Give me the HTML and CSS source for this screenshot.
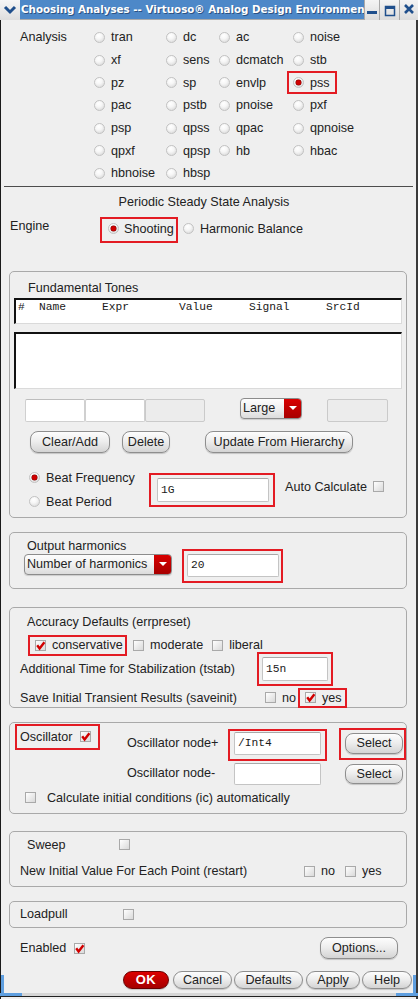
FILE: index.html
```html
<!DOCTYPE html>
<html>
<head>
<meta charset="utf-8">
<link rel="stylesheet" href="styles.css">
</head>
<body>
<div class="window">
  <div class="titlebar">
    <div class="tb-menu"><svg width="14" height="10" viewBox="0 0 14 10"><path d="M2 2 L7 7 L12 2" fill="none" stroke="#1f4f8c" stroke-width="3"/></svg></div>
    <div class="tb-title">Choosing Analyses -- Virtuoso® Analog Design Environment</div>
    <div class="tb-btn tb-min"><svg width="11" height="18" viewBox="0 0 11 18"><rect x="0" y="11" width="10" height="3" fill="#1f4f8c"/></svg></div>
    <div class="tb-btn tb-max"><svg width="12" height="18" viewBox="0 0 12 18"><rect x="1.5" y="6.5" width="9" height="9" fill="none" stroke="#1f4f8c" stroke-width="1.5"/><rect x="1" y="6" width="10" height="3" fill="#1f4f8c"/></svg></div>
    <div class="tb-btn tb-close"><svg width="12" height="18" viewBox="0 0 12 18"><path d="M2 5 L10 13 M10 5 L2 13" stroke="#1f4f8c" stroke-width="2.6"/></svg></div>
  </div>

  <div class="analysis">
    <div class="an-label">Analysis</div>
    <div class="opt"><span class="radio"></span>tran</div>
    <div class="opt"><span class="radio"></span>dc</div>
    <div class="opt"><span class="radio"></span>ac</div>
    <div class="opt"><span class="radio"></span>noise</div>
    <div class="opt"><span class="radio"></span>xf</div>
    <div class="opt"><span class="radio"></span>sens</div>
    <div class="opt"><span class="radio"></span>dcmatch</div>
    <div class="opt"><span class="radio"></span>stb</div>
    <div class="opt"><span class="radio"></span>pz</div>
    <div class="opt"><span class="radio"></span>sp</div>
    <div class="opt"><span class="radio"></span>envlp</div>
    <div class="opt hl pss"><span class="radio on"></span>pss</div>
    <div class="opt"><span class="radio"></span>pac</div>
    <div class="opt"><span class="radio"></span>pstb</div>
    <div class="opt"><span class="radio"></span>pnoise</div>
    <div class="opt"><span class="radio"></span>pxf</div>
    <div class="opt"><span class="radio"></span>psp</div>
    <div class="opt"><span class="radio"></span>qpss</div>
    <div class="opt"><span class="radio"></span>qpac</div>
    <div class="opt"><span class="radio"></span>qpnoise</div>
    <div class="opt"><span class="radio"></span>qpxf</div>
    <div class="opt"><span class="radio"></span>qpsp</div>
    <div class="opt"><span class="radio"></span>hb</div>
    <div class="opt"><span class="radio"></span>hbac</div>
    <div class="opt"><span class="radio"></span>hbnoise</div>
    <div class="opt"><span class="radio"></span>hbsp</div>
  </div>

  <div class="sep"></div>
  <div class="section-title">Periodic Steady State Analysis</div>

  <div class="engine">
    <div class="engine-label">Engine</div>
    <div class="opt hl shoot"><span class="radio on"></span>Shooting</div>
    <div class="opt harm"><span class="radio"></span>Harmonic Balance</div>
  </div>

  <div class="group g-fund">
    <div class="gtitle">Fundamental Tones</div>
    <div class="tbl tbl-head">
      <span>#</span><span>Name</span><span>Expr</span><span>Value</span><span>Signal</span><span>SrcId</span>
    </div>
    <div class="tbl tbl-body"></div>
    <div class="entry-row">
      <div class="fld"></div>
      <div class="fld"></div>
      <div class="fld dis"></div>
      <div class="combo combo-large"><span class="cval">Large</span><span class="carrow"><i></i></span></div>
      <div class="fld dis fld-right"></div>
    </div>
    <div class="btn-row">
      <div class="btn b-clear">Clear/Add</div>
      <div class="btn b-delete">Delete</div>
      <div class="btn b-update">Update From Hierarchy</div>
    </div>
    <div class="beat">
      <div class="beat-col">
        <div class="opt beat-opt"><span class="radio on"></span>Beat Frequency</div>
        <div class="opt beat-opt"><span class="radio"></span>Beat Period</div>
      </div>
      <div class="hl box-1g"><div class="entry e-1g">1G</div></div>
      <div class="auto">Auto Calculate<span class="cb"></span></div>
    </div>
  </div>

  <div class="group g-out">
    <div class="out-left">
      <div class="out-title">Output harmonics</div>
      <div class="combo combo-harm"><span class="cval">Number of harmonics</span><span class="carrow"><i></i></span></div>
    </div>
    <div class="hl box-20"><div class="entry e-20">20</div></div>
  </div>

  <div class="group g-acc">
    <div class="acc-title">Accuracy Defaults (errpreset)</div>
    <div class="acc-checks">
      <div class="hl box-cons"><span class="cb on"><svg width="11" height="11" viewBox="0 0 11 11"><path d="M2.2 5.2 L4.6 8.4 L9.4 2.2" fill="none" stroke="#d10000" stroke-width="2.4"/></svg></span><span class="cb-text">conservative</span></div>
      <span class="cb cb-mod"></span><span class="cb-text">moderate</span>
      <span class="cb cb-lib"></span><span class="cb-text">liberal</span>
    </div>
    <div class="tstab">
      <div class="tstab-label">Additional Time for Stabilization (tstab)</div>
      <div class="hl box-15n"><div class="entry e-15n">15n</div></div>
    </div>
    <div class="saveinit">
      <div class="save-label">Save Initial Transient Results (saveinit)</div>
      <span class="cb"></span><span class="cb-text">no</span>
      <div class="hl box-yes"><span class="cb on"><svg width="11" height="11" viewBox="0 0 11 11"><path d="M2.2 5.2 L4.6 8.4 L9.4 2.2" fill="none" stroke="#d10000" stroke-width="2.4"/></svg></span><span class="cb-text">yes</span></div>
    </div>
  </div>

  <div class="group g-osc">
    <div class="osc-grid">
      <div class="hl box-osc"><span>Oscillator</span><span class="cb on"><svg width="11" height="11" viewBox="0 0 11 11"><path d="M2.2 5.2 L4.6 8.4 L9.4 2.2" fill="none" stroke="#d10000" stroke-width="2.4"/></svg></span></div>
      <div class="node-label nl-plus">Oscillator node+</div>
      <div class="hl box-node"><div class="entry e-node">/Int4</div></div>
      <div class="hl box-sel"><div class="btn b-sel">Select</div></div>
      <div class="node-label nl-minus">Oscillator node-</div>
      <div class="entry e-node2"></div>
      <div class="btn b-sel b-sel2">Select</div>
    </div>
    <div class="ic-row"><span class="cb"></span><span class="ic-text">Calculate initial conditions (ic) automatically</span></div>
  </div>

  <div class="group g-sweep">
    <div class="sweep-row1"><span class="sweep-label">Sweep</span><span class="cb"></span></div>
    <div class="sweep-row2">
      <span class="restart-label">New Initial Value For Each Point (restart)</span>
      <span class="cb"></span><span class="cb-text">no</span>
      <span class="cb cb-yes2"></span><span class="cb-text">yes</span>
    </div>
  </div>

  <div class="group g-load">
    <span class="load-label">Loadpull</span><span class="cb"></span>
  </div>

  <div class="enabled-row">
    <span class="en-label">Enabled</span>
    <span class="cb on"><svg width="11" height="11" viewBox="0 0 11 11"><path d="M2.2 5.2 L4.6 8.4 L9.4 2.2" fill="none" stroke="#d10000" stroke-width="2.4"/></svg></span>
    <div class="btn b-options">Options...</div>
  </div>

  <div class="bottom-row">
    <div class="btn b-ok">OK</div>
    <div class="btn b-cancel">Cancel</div>
    <div class="btn b-defaults">Defaults</div>
    <div class="btn b-apply">Apply</div>
    <div class="btn b-help">Help</div>
  </div>

  <div class="frame-bottom"><span class="corner"></span><span class="frame-mid"></span><span class="corner"></span></div>
</div>
</body>
</html>
```

FILE: styles.css
```css
* { box-sizing: border-box; margin: 0; padding: 0; }
body {
  margin: 0;
  width: 418px;
  height: 999px;
  overflow: hidden;
  background: #ffffff;
  font-family: "Liberation Sans", Arial, sans-serif;
  font-size: 12.6px;
  color: #222222;
}
.window {
  position: relative;
  width: 418px;
  height: 999px;
  background: #efefef;
  box-shadow: inset 1px 0 0 #1a1a1a, inset -2px 0 0 #3a3a3a;
  overflow: hidden;
}
.window::before {
  content: "";
  position: absolute;
  left: 1px;
  bottom: 4px;
  width: 3px;
  height: 20px;
  background: #5f9fe0;
}
.window::after {
  content: "";
  position: absolute;
  right: 2px;
  bottom: 4px;
  width: 3px;
  height: 20px;
  background: #5f9fe0;
}

/* title bar */
.titlebar {
  display: flex;
  height: 20px;
  background: #a9a9a9;
  gap: 1px;
}
.tb-menu {
  width: 20px;
  background: linear-gradient(#f6f6f6, #dedede);
  display: flex;
  align-items: center;
  justify-content: center;
  margin-right: -1px;
}
.tb-title {
  flex: 1;
  background: #4d88c8;
  color: #ffffff;
  font-family: "DejaVu Sans", sans-serif;
  font-weight: bold;
  font-size: 10.3px;
  line-height: 18px;
  height: 19px;
  padding-left: 1px;
  white-space: nowrap;
  overflow: hidden;
  text-shadow: 1px 1px 0 #2c5282;
}
.tb-btn {
  background: linear-gradient(#f4f4f4, #dcdcdc);
  display: flex;
  justify-content: center;
}
.tb-min { width: 14px; }
.tb-max { width: 19px; }
.tb-close { width: 18px; }

/* radios & checkboxes */
.opt {
  display: flex;
  align-items: center;
  gap: 6px;
  white-space: nowrap;
}
.radio {
  position: relative;
  flex: none;
  width: 11px;
  height: 11px;
  border-radius: 50%;
  border: 1px solid #c2c2c2;
  background: radial-gradient(circle at 40% 30%, #ffffff 0%, #f6f6f6 40%, #d2d2d2 100%);
}
.radio.on::after {
  content: "";
  position: absolute;
  left: 2px;
  top: 2px;
  width: 5px;
  height: 5px;
  border-radius: 50%;
  background: #cf0000;
  box-shadow: 0 0 0 0.5px #7a0000;
}
.cb {
  display: inline-flex;
  flex: none;
  width: 11px;
  height: 11px;
  border: 1px solid #a9a9a9;
  background: linear-gradient(135deg, #ffffff, #d9d9d9);
  align-items: center;
  justify-content: center;
  overflow: visible;
}
.cb svg { display: block; margin: -1px; }
.hl { border: 2px solid #e31b23; }

/* analysis grid */
.analysis {
  display: grid;
  grid-template-columns: 74px 72px 53px 74px 1fr;
  grid-auto-rows: 22.7px;
  margin-top: 6px;
  padding-left: 20px;
}
.an-label {
  grid-row: 1 / span 7;
  line-height: 22.7px;
}
.pss {
  margin-left: -6px;
  padding-left: 4px;
  width: 50px;
  height: 23px;
  align-self: center;
  gap: 6px;
}
.sep {
  height: 1px;
  background: #4d4d4d;
  margin: 1px 5px 0 4px;
}
.section-title {
  text-align: center;
  margin-top: 8px;
  line-height: 14px;
  padding-right: 10px;
}

/* engine */
.engine {
  display: flex;
  margin-top: 8px;
  height: 26px;
}
.engine-label {
  width: 100px;
  padding-left: 10px;
  padding-top: 2px;
  line-height: 14px;
}
.shoot {
  width: 78px;
  height: 26px;
  padding-left: 6px;
  padding-bottom: 2px;
  gap: 5px;
}
.harm {
  margin-left: 5px;
  padding-bottom: 2px;
}

/* groups */
.group {
  margin-left: 9px;
  width: 398px;
  border: 1px solid #a9a9a9;
  border-radius: 5px;
}
.g-fund {
  margin-top: 28px;
  height: 247px;
  padding-top: 9px;
}
.gtitle {
  line-height: 14px;
  margin-left: 18px;
}
.tbl {
  margin-left: 4px;
  width: 388px;
  background: #ffffff;
  border-top: 2px solid #111111;
  border-left: 2px solid #111111;
  border-right: 1px solid #dadada;
  border-bottom: 1px solid #dadada;
}
.tbl-head {
  margin-top: 3px;
  height: 26px;
  display: grid;
  grid-template-columns: 21px 63px 77px 70px 77px auto;
  align-items: start;
  padding-left: 2px;
  font-family: "Liberation Mono", "Courier New", monospace;
  font-size: 11.25px;
  line-height: 14px;
  color: #1a1a1a;
}
.tbl-body {
  margin-top: 8px;
  height: 57px;
}
.entry-row {
  display: flex;
  align-items: flex-start;
  margin-top: 10px;
  height: 23px;
  padding-left: 15px;
}
.fld {
  width: 60px;
  height: 23px;
  background: #ffffff;
  border: 1px solid #d0d0d0;
  border-top-color: #bdbdbd;
  border-radius: 2px;
}
.fld.dis { background: #ececec; border-color: #cacaca; }
.fld-right { margin-left: 25px; width: 61px; }

.combo {
  display: flex;
  height: 21px;
  border: 1px solid #8c8c8c;
  border-radius: 4px;
  overflow: hidden;
  background: linear-gradient(#fdfdfd, #f0f0f0 50%, #dcdcdc);
  box-shadow: 0 1px 1px rgba(0,0,0,0.15);
}
.cval {
  flex: 1;
  padding-left: 2px;
  line-height: 19px;
  white-space: nowrap;
  overflow: hidden;
}
.carrow {
  width: 17px;
  flex: none;
  background: linear-gradient(#d80000, #a80000);
  display: flex;
  align-items: center;
  justify-content: center;
}
.carrow i {
  display: block;
  width: 0;
  height: 0;
  border-left: 4px solid transparent;
  border-right: 4px solid transparent;
  border-top: 4px solid #ffffff;
}
.combo-large {
  width: 62px;
  margin-left: 35px;
  margin-top: -1px;
}

.btn {
  height: 22px;
  border: 1px solid #8e8e8e;
  border-radius: 8px;
  background: linear-gradient(#fdfdfd, #eeeeee 45%, #d4d4d4);
  box-shadow: 0 1px 1px rgba(0,0,0,0.18);
  display: flex;
  align-items: center;
  justify-content: center;
  white-space: nowrap;
  color: #222222;
}
.btn-row {
  display: flex;
  margin-top: 9px;
  height: 22px;
}
.b-clear { margin-left: 20px; width: 80px; }
.b-delete { margin-left: 12px; width: 48px; }
.b-update { margin-left: 35px; width: 148px; }

.beat {
  display: flex;
  align-items: flex-start;
  margin-top: 13px;
}
.beat-col {
  margin-left: 19px;
  width: 120px;
}
.beat-opt { height: 24px; }
.box-1g {
  margin-top: 7px;
  width: 126px;
  height: 34px;
  padding: 3px 0 0 6px;
}
.entry {
  background: #ffffff;
  border: 1px solid #c4c4c4;
  border-top-color: #a8a8a8;
  border-radius: 2px;
  font-family: "Liberation Mono", "Courier New", monospace;
  font-size: 11.25px;
  padding-left: 3px;
  display: flex;
  align-items: center;
  color: #1a1a1a;
}
.e-1g { width: 112px; height: 24px; }
.auto {
  display: flex;
  align-items: center;
  gap: 6px;
  margin-left: 10px;
  margin-top: 14px;
  line-height: 14px;
}

/* output harmonics */
.g-out {
  margin-top: 14px;
  height: 57px;
  display: flex;
  align-items: flex-start;
}
.out-left {
  margin-left: 14px;
  padding-top: 6px;
}
.out-title {
  padding-left: 3px;
  line-height: 14px;
}
.combo-harm {
  margin-top: 1px;
  width: 148px;
}
.box-20 {
  margin-left: 10px;
  margin-top: 16px;
  width: 101px;
  height: 34px;
  padding: 3px 0 0 3px;
}
.e-20 { width: 92px; height: 23px; }

/* accuracy */
.g-acc {
  margin-top: 18px;
  height: 101px;
  padding-top: 7px;
}
.acc-title {
  margin-left: 17px;
  line-height: 14px;
}
.acc-checks {
  display: flex;
  align-items: center;
  margin-top: 6px;
  margin-left: 18px;
  height: 21px;
}
.box-cons {
  display: flex;
  align-items: center;
  width: 99px;
  height: 21px;
  padding-left: 5px;
}
.cb-text { margin-left: 6px; white-space: nowrap; }
.cb-mod { margin-left: 6px; }
.cb-lib { margin-left: 9px; }
.tstab {
  display: flex;
  align-items: center;
  margin-top: -4px;
  height: 34px;
}
.tstab-label {
  width: 247px;
  padding-left: 10px;
  white-space: nowrap;
}
.box-15n {
  width: 76px;
  height: 34px;
  padding: 3px 0 0 3px;
}
.e-15n { width: 66px; height: 24px; }
.saveinit {
  display: flex;
  align-items: center;
  margin-top: 2px;
  height: 20px;
}
.save-label {
  width: 255px;
  padding-left: 10px;
  white-space: nowrap;
}
.box-yes {
  display: flex;
  align-items: center;
  margin-left: 2px;
  width: 49px;
  height: 20px;
  padding-left: 5px;
}

/* oscillator */
.g-osc {
  margin-top: 14px;
  height: 92px;
}
.osc-grid {
  display: grid;
  grid-template-columns: 85px 27px 101px 99px 12px 67px;
  grid-template-rows: 38px 24px;
  padding-left: 5px;
  padding-top: 1px;
  align-items: start;
}
.box-osc {
  grid-column: 1;
  grid-row: 1;
  display: flex;
  align-items: center;
  justify-content: space-between;
  height: 26px;
  padding-left: 3px;
  padding-right: 7px;
}
.node-label {
  grid-column: 3;
  line-height: 14px;
  white-space: nowrap;
}
.nl-plus { grid-row: 1; margin-top: 12px; }
.nl-minus { grid-row: 2; margin-top: 4px; }
.box-node {
  grid-column: 4;
  grid-row: 1;
  margin-top: 5px;
  height: 32px;
  padding: 1px 0 0 4px;
}
.e-node { width: 87px; height: 23px; }
.box-sel {
  grid-column: 6;
  grid-row: 1;
  margin-top: 4px;
  height: 32px;
  padding: 3px 0 0 4px;
}
.b-sel { width: 58px; height: 21px; }
.e-node2 {
  grid-column: 4;
  grid-row: 2;
  margin: 1px 0 0 6px;
  width: 87px;
  height: 22px;
}
.b-sel2 {
  grid-column: 6;
  grid-row: 2;
  margin: 2px 0 0 6px;
  height: 20px;
}
.ic-row {
  display: flex;
  align-items: center;
  margin-top: 4px;
  height: 16px;
  padding-left: 15px;
}
.ic-text { margin-left: 11px; white-space: nowrap; }

/* sweep */
.g-sweep {
  margin-top: 17px;
  height: 56px;
}
.sweep-row1 {
  display: flex;
  align-items: center;
  height: 26px;
}
.sweep-label {
  width: 109px;
  padding-left: 17px;
}
.sweep-row2 {
  display: flex;
  align-items: center;
  height: 27px;
}
.restart-label {
  width: 294px;
  padding-left: 10px;
  white-space: nowrap;
}
.cb-yes2 { margin-left: 10px; }

.g-load {
  margin-top: 14px;
  height: 27px;
  display: flex;
  align-items: center;
}
.load-label {
  width: 113px;
  padding-left: 10px;
}

.enabled-row {
  display: flex;
  align-items: center;
  margin-top: 9px;
  height: 22px;
  padding-left: 20px;
}
.enabled-row .cb { margin-left: 8px; margin-top: 2px; }
.b-options {
  margin-left: auto;
  margin-right: 20px;
  width: 78px;
}

.bottom-row {
  display: flex;
  margin-top: 12px;
  height: 18px;
  padding-left: 123px;
}
.bottom-row .btn { height: 18px; border-radius: 9px; }
.b-ok {
  width: 46px;
  background: linear-gradient(#dc0000, #a50000);
  border-color: #6a0000;
  color: #ffffff;
  font-weight: bold;
  font-size: 13px;
  letter-spacing: 0.5px;
}
.b-cancel { width: 59px; margin-left: 4px; }
.b-defaults { width: 69px; margin-left: 2px; }
.b-apply { width: 54px; margin-left: 3px; }
.b-help { width: 50px; margin-left: 2px; }

.frame-bottom {
  display: flex;
  margin-top: 4px;
  height: 4px;
  border-bottom: 1px solid #222222;
  background: #d6d6d6;
}
.corner {
  width: 22px;
  background: #5f9fe0;
}
.frame-mid { flex: 1; }
```
